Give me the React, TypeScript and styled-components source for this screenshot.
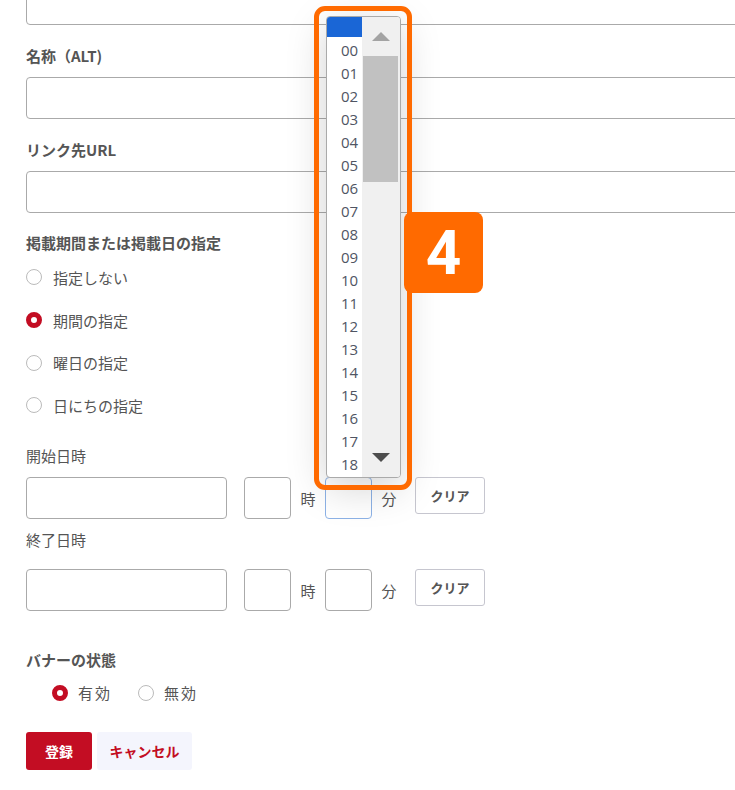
import React from 'react'
import styled, {createGlobalStyle} from 'styled-components'

const GlobalStyle = createGlobalStyle`
  html, body {
    margin: 0;
    padding: 0;
    background: #fff;
    overflow: hidden;
  }
  body {
    font-family: "Noto Sans CJK JP", "Noto Sans", sans-serif;
    color: #555;
  }
`

const red = '#c30d23'
const orange = '#ff6a00'

const Page = styled.div`
  position: relative;
  width: 735px;
  height: 790px;
  overflow: hidden;
`

const Form = styled.div`
  display: flex;
  flex-direction: column;
  padding-left: 26px;
  margin-top: -17px;
`

const Label = styled.div<{ bold?: boolean, top: number, bottom: number }>`
  font-size: 15px;
  line-height: 22px;
  font-weight: ${({bold}) => bold ? 700 : 400};
  color: #555;
  margin-top: ${({top}) => top}px;
  margin-bottom: ${({bottom}) => bottom}px;
`

const TextInput = styled.div`
  box-sizing: border-box;
  width: 760px;
  height: 42px;
  border: 1px solid #aaa;
  border-radius: 4px;
  background: #fff;
`

const RadioList = styled.div`
  display: flex;
  flex-direction: column;
`

const RadioRow = styled.label`
  display: flex;
  align-items: center;
  height: 42.7px;
  gap: 11px;
  font-size: 15px;
  color: #555;
`

const Radio = styled.span<{ checked?: boolean }>`
  box-sizing: border-box;
  width: 16px;
  height: 16px;
  border-radius: 50%;
  flex-shrink: 0;
  background: #fff;
  border: ${({checked}) => checked ? `5px solid ${red}` : '1px solid #bbb'};
`

const DateRow = styled.div`
  display: flex;
  align-items: center;
  height: 42px;
`

const DateBox = styled.div`
  box-sizing: border-box;
  width: 201px;
  height: 42px;
  border: 1px solid #aaa;
  border-radius: 4px;
  margin-right: 17px;
`

const TimeBox = styled.div<{ focused?: boolean }>`
  box-sizing: border-box;
  width: 47px;
  height: 42px;
  border: 1px solid ${({focused}) => focused ? '#8db2e6' : '#aaa'};
  border-radius: 4px;
`

const Unit = styled.span`
  font-size: 15px;
  width: 34px;
  text-align: center;
  padding-top: 2px;
`

const ClearButton = styled.button`
  box-sizing: border-box;
  align-self: flex-start;
  margin-left: 9px;
  width: 70px;
  height: 37px;
  border: 1px solid #c6c6cf;
  border-radius: 3px;
  background: #fff;
  font-family: inherit;
  font-size: 13px;
  font-weight: 700;
  color: #555;
`

const StatusRow = styled.div`
  display: flex;
  gap: 26px;
  padding-left: 26px;
  margin-top: 7px;
`

const StatusItem = styled.label`
  display: flex;
  align-items: center;
  gap: 10px;
  height: 30px;
  font-size: 15px;
  letter-spacing: 2px;
  color: #555;
`

const Actions = styled.div`
  display: flex;
  gap: 5px;
  margin-top: 24px;
`

const Button = styled.button<{ primary?: boolean }>`
  width: ${({primary}) => primary ? 66 : 95}px;
  height: 38px;
  padding: 0;
  border: none;
  border-radius: 3px;
  font-family: inherit;
  font-size: 14px;
  font-weight: 700;
  background: ${({primary}) => primary ? red : '#f4f5fd'};
  color: ${({primary}) => primary ? '#fff' : red};
`

const Highlight = styled.div`
  position: absolute;
  left: 314px;
  top: 6px;
  width: 98px;
  height: 484px;
  box-sizing: border-box;
  border: 5px solid ${orange};
  border-radius: 11px;
`

const ListBox = styled.div`
  position: absolute;
  left: 326px;
  top: 16px;
  width: 75px;
  height: 462px;
  box-sizing: border-box;
  display: flex;
  border: 1px solid #aaa;
  border-radius: 4px;
  background: #fff;
  overflow: hidden;
  box-shadow: 0 10px 40px rgba(0, 0, 0, 0.18);
`

const Options = styled.div`
  width: 35px;
  display: flex;
  flex-direction: column;
`

const Option = styled.div<{ selected?: boolean }>`
  flex-shrink: 0;
  height: ${({selected}) => selected ? 20 : 23}px;
  line-height: 26px;
  padding-left: 14px;
  font-size: 15px;
  color: #4f5563;
  font-family: "Open Sans", "Noto Sans", sans-serif;
  background: ${({selected}) => selected ? '#1a66d6' : 'transparent'};
`

const ScrollTrack = styled.div`
  flex: 1;
  position: relative;
  background: #f0f0f0;
`

const Arrow = styled.span<{ down?: boolean }>`
  position: absolute;
  left: 10px;
  width: 0;
  height: 0;
  border-left: 9px solid transparent;
  border-right: 9px solid transparent;
  ${({down}) => down
    ? 'bottom: 15px; border-top: 9px solid #4d4d4d;'
    : 'top: 15px; border-bottom: 9px solid #a3a3a3;'}
`

const Thumb = styled.div`
  position: absolute;
  left: 1px;
  right: 2px;
  top: 39px;
  height: 126px;
  background: #c1c1c1;
`

const Badge = styled.div`
  position: absolute;
  left: 404px;
  top: 212px;
  width: 79px;
  height: 81px;
  border-radius: 8px;
  background: ${orange};
  color: #fff;
  display: flex;
  align-items: center;
  justify-content: center;
  font-family: "Roboto", "Noto Sans", sans-serif;
  font-size: 62px;
  font-weight: 700;
`

const hours = Array.from({length: 19}, (_, i) => String(i).padStart(2, '0'))

const periodOptions = [
    {label: '指定しない', checked: false},
    {label: '期間の指定', checked: true},
    {label: '曜日の指定', checked: false},
    {label: '日にちの指定', checked: false},
]

const DateTimeRow = ({focused}: { focused?: boolean }) => (
    <DateRow>
        <DateBox/>
        <TimeBox/>
        <Unit>時</Unit>
        <TimeBox focused={focused}/>
        <Unit>分</Unit>
        <ClearButton>クリア</ClearButton>
    </DateRow>
)

export default function App() {
    return (
        <Page>
            <GlobalStyle/>
            <Form>
                <TextInput/>
                <Label bold top={20} bottom={10}>名称（ALT)</Label>
                <TextInput/>
                <Label bold top={20} bottom={10}>リンク先URL</Label>
                <TextInput/>
                <Label bold top={19} bottom={2}>掲載期間または掲載日の指定</Label>
                <RadioList>
                    {periodOptions.map(o => (
                        <RadioRow key={o.label}>
                            <Radio checked={o.checked}/>
                            {o.label}
                        </RadioRow>
                    ))}
                </RadioList>
                <Label top={18} bottom={10}>開始日時</Label>
                <DateTimeRow focused/>
                <Label top={10} bottom={18}>終了日時</Label>
                <DateTimeRow/>
                <Label bold top={38} bottom={0}>バナーの状態</Label>
                <StatusRow>
                    <StatusItem><Radio checked/>有効</StatusItem>
                    <StatusItem><Radio/>無効</StatusItem>
                </StatusRow>
                <Actions>
                    <Button primary>登録</Button>
                    <Button>キャンセル</Button>
                </Actions>
            </Form>

            <ListBox>
                <Options>
                    <Option selected/>
                    {hours.map(h => <Option key={h}>{h}</Option>)}
                </Options>
                <ScrollTrack>
                    <Arrow/>
                    <Thumb/>
                    <Arrow down/>
                </ScrollTrack>
            </ListBox>
            <Highlight/>
            <Badge>4</Badge>
        </Page>
    )
}
